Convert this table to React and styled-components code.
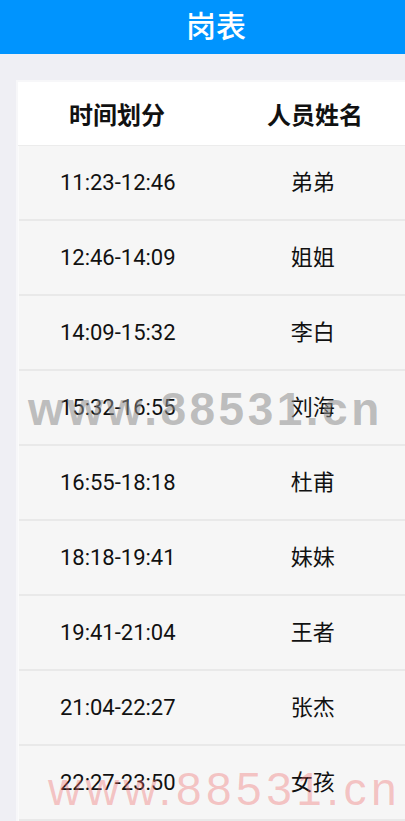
import React from 'react';
import styled, { createGlobalStyle } from 'styled-components';

const GlobalStyle = createGlobalStyle`
  html, body {
    margin: 0;
    padding: 0;
    overflow: hidden;
    background: #efeff4;
  }
  body {
    font-family: Roboto, "Noto Sans CJK SC", sans-serif;
  }
`;

const schedule = [
  { time: '11:23-12:46', name: '弟弟' },
  { time: '12:46-14:09', name: '姐姐' },
  { time: '14:09-15:32', name: '李白' },
  { time: '15:32-16:55', name: '刘海' },
  { time: '16:55-18:18', name: '杜甫' },
  { time: '18:18-19:41', name: '妹妹' },
  { time: '19:41-21:04', name: '王者' },
  { time: '21:04-22:27', name: '张杰' },
  { time: '22:27-23:50', name: '女孩' },
];

const Page = styled.div`
  position: relative;
  width: 432px;
  min-height: 821px;
  background: #efeff4;
`;

const TopBar = styled.header`
  height: 54px;
  background: #0094fe;
  display: flex;
  align-items: center;
  justify-content: center;
`;

const Title = styled.h1`
  margin: 0 0 6px;
  color: #ffffff;
  font-family: "Noto Sans CJK SC", sans-serif;
  font-size: 30px;
  font-weight: 500;
  line-height: 1;
`;

const Card = styled.div`
  margin: 26px 16px 0;
  border: 2px solid #f7f7f9;
  border-bottom: none;
  background: #fbfbfb;
`;

const Row = styled.div`
  display: grid;
  grid-template-columns: 1fr 1fr;
  align-items: center;
  height: ${p => (p.$head ? '63px' : '73px')};
  background: ${p => (p.$head ? '#ffffff' : '#f6f6f6')};
  border-bottom: ${p => (p.$head ? '1px solid #ececec' : '2px solid #e9e9e9')};
  margin-left: ${p => (p.$head ? '0' : '1px')};
`;

const Cell = styled.div`
  text-align: center;
  color: #111111;
  font-family: ${p => (p.$head ? '"Noto Sans CJK SC"' : 'Roboto, "Noto Sans CJK SC"')}, sans-serif;
  font-size: ${p => (p.$head ? '24px' : '22px')};
  font-weight: ${p => (p.$head ? 700 : 400)};
  line-height: 1;
  padding-right: ${p => p.$shift || 0}px;
`;

const Watermark = styled.div`
  position: absolute;
  left: ${p => p.$left}px;
  top: ${p => p.$top}px;
  font-family: "Liberation Sans", Arial, sans-serif;
  font-size: 46px;
  line-height: 46px;
  white-space: nowrap;
  pointer-events: none;
  letter-spacing: ${p => (p.$bold ? '3.5px' : '4.5px')};
  font-weight: ${p => (p.$bold ? 700 : 400)};
  color: ${p => (p.$bold ? 'rgba(140, 140, 140, 0.55)' : 'rgba(240, 110, 110, 0.38)')};
`;

export default function App() {
  return (
    <Page>
      <GlobalStyle />
      <TopBar>
        <Title>岗表</Title>
      </TopBar>
      <Card>
        <Row $head>
          <Cell $head>时间划分</Cell>
          <Cell $head>人员姓名</Cell>
        </Row>
        {schedule.map(item => (
          <Row key={item.time}>
            <Cell>{item.time}</Cell>
            <Cell $shift={5}>{item.name}</Cell>
          </Row>
        ))}
      </Card>
      <Watermark $bold $left={28} $top={386}>www.88531.cn</Watermark>
      <Watermark $left={48} $top={766}>www.88531.cn</Watermark>
    </Page>
  );
}
